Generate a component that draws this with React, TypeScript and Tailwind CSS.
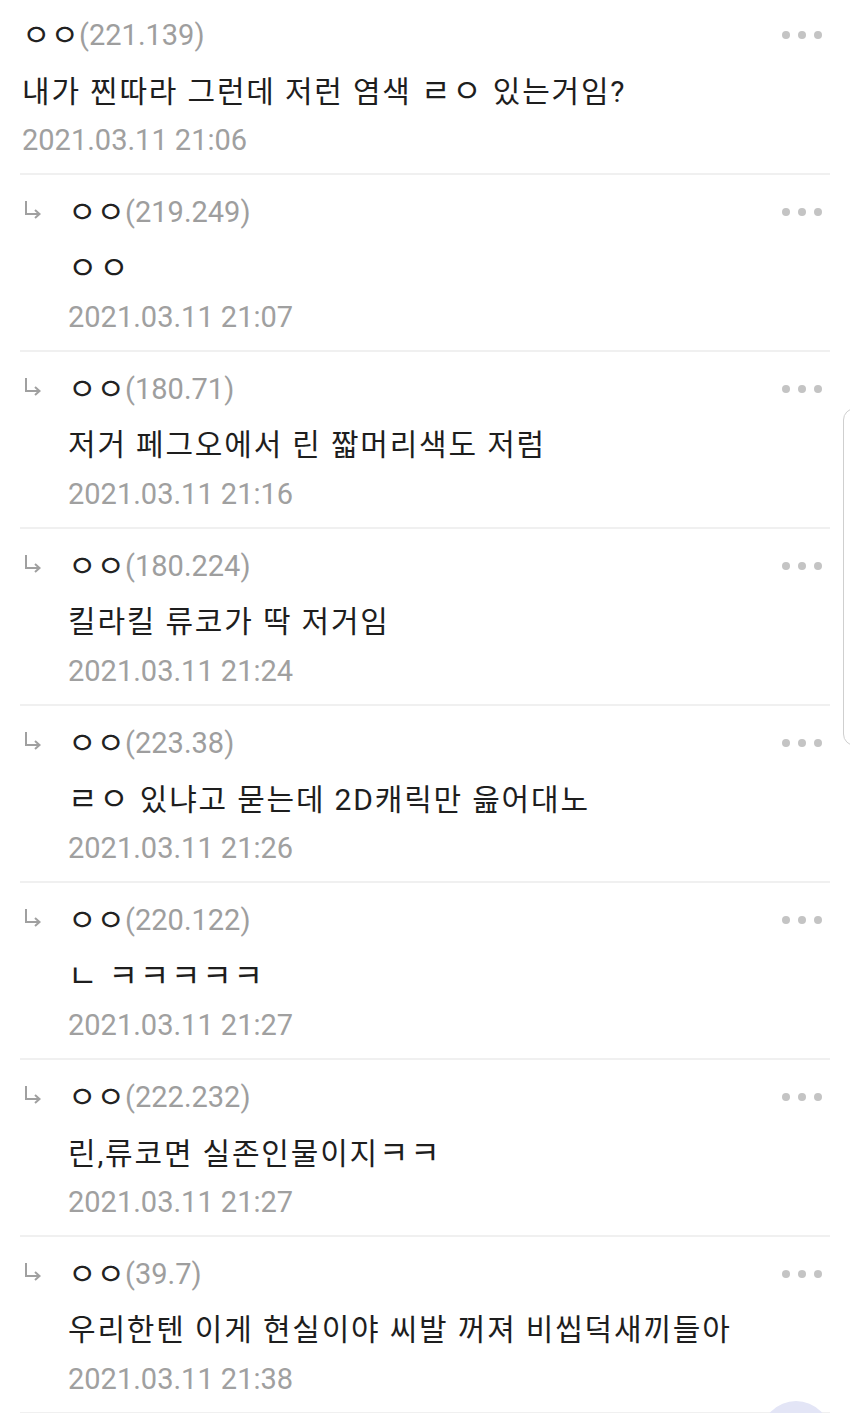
import React from "react";

type Item = { ip: string; text: string; date: string; reply: boolean };

const items: Item[] = [
  { ip: "221.139", text: "내가 찐따라 그런데 저런 염색 ㄹㅇ 있는거임?", date: "2021.03.11 21:06", reply: false },
  { ip: "219.249", text: "ㅇㅇ", date: "2021.03.11 21:07", reply: true },
  { ip: "180.71", text: "저거 페그오에서 린 짧머리색도 저럼", date: "2021.03.11 21:16", reply: true },
  { ip: "180.224", text: "킬라킬 류코가 딱 저거임", date: "2021.03.11 21:24", reply: true },
  { ip: "223.38", text: "ㄹㅇ 있냐고 묻는데 2D캐릭만 읊어대노", date: "2021.03.11 21:26", reply: true },
  { ip: "220.122", text: "ㄴ ㅋㅋㅋㅋㅋ", date: "2021.03.11 21:27", reply: true },
  { ip: "222.232", text: "린,류코면 실존인물이지ㅋㅋ", date: "2021.03.11 21:27", reply: true },
  { ip: "39.7", text: "우리한텐 이게 현실이야 씨발 꺼져 비씹덕새끼들아", date: "2021.03.11 21:38", reply: true },
];

const font = { fontFamily: "Roboto, 'Noto Sans CJK KR', sans-serif" };

function Rich({ text }: { text: string }) {
  const parts = text.split(/([\u3131-\u318E]+)/);
  return (
    <span>
      {parts.map((p, i) =>
        /^[\u3131-\u318E]+$/.test(p) ? (
          <span key={i} className="text-[32px]">
            {p}
          </span>
        ) : (
          <React.Fragment key={i}>{p}</React.Fragment>
        )
      )}
    </span>
  );
}

function Arrow() {
  return (
    <svg width="18" height="18" viewBox="0 0 18 18" className="block">
      <path d="M2 0 V13 H15" fill="none" stroke="#a0a0a0" strokeWidth="2" />
      <path d="M11 9 L15.5 13 L11 17" fill="none" stroke="#a0a0a0" strokeWidth="2" />
    </svg>
  );
}

function Dots() {
  return (
    <div className="flex items-center gap-[8px]">
      <span className="w-[8px] h-[8px] rounded-full bg-[#c4c4c4]" />
      <span className="w-[8px] h-[8px] rounded-full bg-[#c4c4c4]" />
      <span className="w-[8px] h-[8px] rounded-full bg-[#c4c4c4]" />
    </div>
  );
}

function Row({ item }: { item: Item }) {
  return (
    <div className="mx-[20px] h-[177px] border-b-2 border-[#f0f0f0] flex">
      <div className={item.reply ? "w-[48px] shrink-0 pt-[26px] pl-[4px]" : "w-[2px] shrink-0"}>
        {item.reply && <Arrow />}
      </div>
      <div className="flex-1 pt-[12px]">
        <div className="h-[50px] flex items-center justify-between">
          <div className="leading-none flex items-center">
            <span className="text-[#222] text-[31px]">ㅇㅇ</span>
            <span className="text-[#9e9e9e] text-[29px]">({item.ip})</span>
          </div>
          <div className="pr-[8px]">
            <Dots />
          </div>
        </div>
        <div className="h-[60px] pt-[2px] flex items-center text-[30px] tracking-[1.8px] text-[#1e1e1e] leading-none whitespace-nowrap">
          <Rich text={item.text} />
        </div>
        <div className="h-[40px] flex items-center text-[29px] text-[#a0a0a0] leading-none">
          {item.date}
        </div>
      </div>
    </div>
  );
}

export default function App() {
  return (
    <div className="relative w-[850px] h-[1413px] overflow-hidden bg-white" style={font}>
      <div className="-mt-[2px]">
        {items.map((it, i) => (
          <Row key={i} item={it} />
        ))}
      </div>
      <div className="absolute left-[843px] top-[408px] w-[40px] h-[338px] border border-[#cfcfcf] rounded-l-[12px]" />
      <div className="absolute left-[761px] top-[1401px] w-[70px] h-[70px] rounded-full bg-[#e3e5f6]" />
    </div>
  );
}
